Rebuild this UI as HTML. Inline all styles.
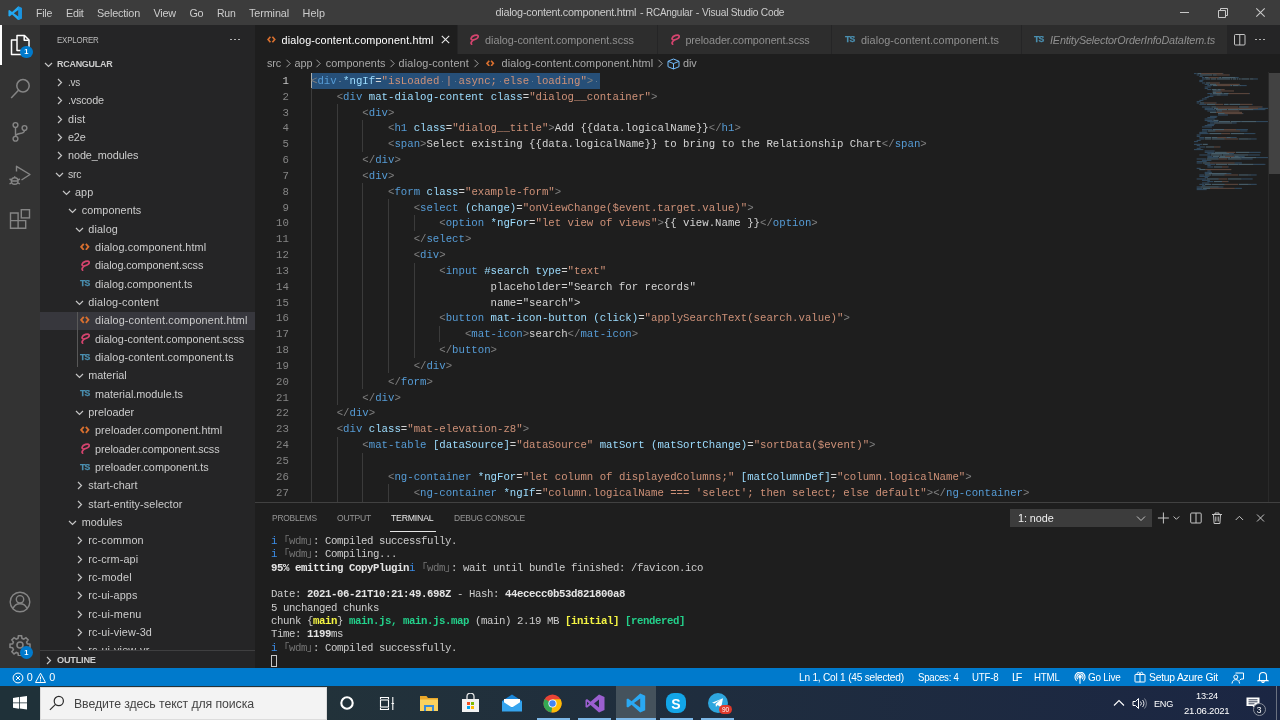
<!DOCTYPE html><html><head><meta charset="utf-8"><title>dialog-content.component.html - RCAngular - Visual Studio Code</title><style>
*{box-sizing:border-box}
html,body{margin:0;padding:0}
body{width:1280px;height:720px;overflow:hidden;background:#1e1e1e;position:relative;will-change:transform;font-family:"Liberation Sans","DejaVu Sans",sans-serif;font-size:10.83px;color:#cccccc}
.abs{position:absolute}
.t{position:absolute;white-space:pre;line-height:1}
#titlebar{left:0;top:0;width:1280px;height:25px;background:#3c3c3c}
#actbar{left:0;top:25px;width:40px;height:644px;background:#333333}
#sidebar{left:40px;top:25px;width:215px;height:644px;background:#252526;overflow:hidden}
#tabs{left:255px;top:25px;width:1025px;height:29px;background:#252526;overflow:hidden}
.tab{position:absolute;top:0;height:29px;background:#2d2d2d;border-right:1px solid #252526}
.tab.act{background:#1e1e1e}
#code{left:255px;top:72px;width:1025px;height:430px;background:#1e1e1e;overflow:hidden}
.ln{position:absolute;left:0;width:33.8px;text-align:right;color:#858585;font-family:"Liberation Mono","DejaVu Sans Mono",monospace;font-size:10.69px;line-height:15.833px;height:15.833px;white-space:pre}
.cl{position:absolute;left:56px;color:#d4d4d4;font-family:"Liberation Mono","DejaVu Sans Mono",monospace;font-size:10.69px;line-height:15.833px;height:15.833px;white-space:pre}
.b{color:#808080}.g{color:#569cd6}.a{color:#9cdcfe}.s{color:#ce9178}
#panel{left:255px;top:502px;width:1025px;height:167px;background:#1e1e1e;border-top:1px solid #414141;overflow:hidden}
.tl{position:absolute;left:16px;color:#cccccc;font-family:"Liberation Mono","Noto Sans CJK JP","DejaVu Sans Mono",monospace;font-size:10.69px;letter-spacing:-0.415px;line-height:13.333px;height:13.333px;white-space:pre}
.tl b{color:#e5e5e5}
#status{left:0;top:668.1px;width:1280px;height:18.3px;background:#007acc;color:#fff}
#taskbar{left:0;top:686.4px;width:1280px;height:33.6px;background:linear-gradient(90deg,#22323a 0%,#22323a 25%,#1f2d3e 55%,#1b2643 100%)}
.row{position:absolute;left:0;width:215px;height:18.333px}
</style></head><body>
<div id="titlebar" class="abs">
<svg class="abs" style="left:7.5px;top:5.5px" width="14.5" height="14.5" viewBox="0 0 100 100"><path d="M71 2 L96 14 V86 L71 98 L28 59 L10 73 L3 69 V31 L10 27 L28 41 Z M71 28 L40 50 L71 72 Z" fill="#23a9f2" fill-rule="evenodd"/><path d="M71 2 L96 14 V86 L71 98 Z" fill="#0f7fd0" opacity=".5"/></svg>
<span class="t" style="left:35.75px;top:7.58px;font-size:10.83px;color:#cccccc;letter-spacing:-0.250px;transform:scaleX(0.9726);transform-origin:0 50%">File</span>
<span class="t" style="left:65.50px;top:7.58px;font-size:10.83px;color:#cccccc;letter-spacing:-0.250px;transform:scaleX(0.9908);transform-origin:0 50%">Edit</span>
<span class="t" style="left:97.00px;top:7.58px;font-size:10.83px;color:#cccccc;letter-spacing:-0.172px">Selection</span>
<span class="t" style="left:153.50px;top:7.58px;font-size:10.83px;color:#cccccc;letter-spacing:-0.195px">View</span>
<span class="t" style="left:189.50px;top:7.58px;font-size:10.83px;color:#cccccc;letter-spacing:-0.474px">Go</span>
<span class="t" style="left:217.00px;top:7.58px;font-size:10.83px;color:#cccccc;letter-spacing:-0.250px;transform:scaleX(0.9677);transform-origin:0 50%">Run</span>
<span class="t" style="left:249.00px;top:7.58px;font-size:10.83px;color:#cccccc;letter-spacing:-0.116px">Terminal</span>
<span class="t" style="left:302.50px;top:7.58px;font-size:10.83px;color:#cccccc;letter-spacing:0.057px">Help</span>
<span class="t" style="left:495.50px;top:7.08px;font-size:10.83px;color:#cccccc;letter-spacing:-0.252px">dialog-content.component.html</span>
<span class="t" style="left:640.00px;top:7.08px;font-size:10.83px;color:#cccccc;letter-spacing:-0.606px">-</span>
<span class="t" style="left:645.50px;top:7.08px;font-size:10.83px;color:#cccccc;letter-spacing:-0.250px;transform:scaleX(0.9168);transform-origin:0 50%">RCAngular</span>
<span class="t" style="left:695.70px;top:7.08px;font-size:10.83px;color:#cccccc;letter-spacing:-0.606px">-</span>
<span class="t" style="left:702.00px;top:7.08px;font-size:10.83px;color:#cccccc;letter-spacing:-0.250px;transform:scaleX(0.9415);transform-origin:0 50%">Visual Studio Code</span>
<svg class="abs" style="left:1170px;top:0" width="110" height="25" viewBox="0 0 110 25"><g stroke="#c8c8c8" stroke-width="1" fill="none"><path d="M10 12.5h9"/><path d="M48.500 10.500h7v7h-7z"/><path d="M50.500 10.500v-2h7v7h-2"/><path d="M86.300 8.300l8.400 8.400M94.700 8.300l-8.400 8.400" stroke-width="1.1"/></g></svg>
</div>
<div id="actbar" class="abs">
<div class="abs" style="left:0;top:0;width:1.600px;height:40px;background:#fff"></div>
<svg class="abs" style="left:7.60px;top:8.20px" width="24" height="24" viewBox="0 0 24 24"><g fill="none" stroke="#ffffff" stroke-width="1.500" stroke-linejoin="round"><path d="M9 2.500h7.500l4.500 4.500v10.500h-12z"/><path d="M16.200 2.800v4.500h4.500"/><path d="M9 7h-5.500v14.500h10.500v-4"/></g></svg>
<div class="abs" style="left:20px;top:20.700px;width:12.500px;height:12.500px;border-radius:7px;background:#007acc"></div><span class="t" style="left:20.00px;top:23.25px;font-size:7.50px;color:#fff;font-weight:bold;width:12.500px;text-align:center">1</span>
<svg class="abs" style="left:8.00px;top:51.00px" width="24" height="24" viewBox="0 0 24 24"><g fill="none" stroke="#858585" stroke-width="1.500"><circle cx="15" cy="9.750" r="6.200"/><path d="M10.500 14.200l-7.300 7.800"/></g></svg>
<svg class="abs" style="left:8.00px;top:95.00px" width="24" height="24" viewBox="0 0 24 24"><g fill="none" stroke="#858585" stroke-width="1.400"><circle cx="7.500" cy="5" r="2.400"/><circle cx="7.500" cy="18.750" r="2.400"/><circle cx="16.500" cy="8" r="2.400"/><path d="M7.500 7.400v9M16.500 10.400c0 4.600-9 1.600-9 6"/></g></svg>
<svg class="abs" style="left:8.00px;top:138.00px" width="24" height="24" viewBox="0 0 24 24"><g fill="none" stroke="#858585" stroke-width="1.400" stroke-linejoin="round"><path d="M8.500 8.500v-5.200l13.500 8.200-8.500 5.500"/><circle cx="6.700" cy="18" r="3.300"/><path d="M6.700 14.700v-1.500M1.500 16l2 1M1.500 21l2-1.200M11.900 16l-2 1M11.900 21l-2-1.200M3.400 18h6.600"/></g></svg>
<svg class="abs" style="left:8.00px;top:181.50px" width="24" height="24" viewBox="0 0 24 24"><g fill="none" stroke="#858585" stroke-width="1.400"><path d="M2.500 6h7.600v7.600h7.600v7.700h-15.200zM2.500 13.600h7.600M10.100 13.600v7.700"/><rect x="13.300" y="2.700" width="8.200" height="8.200"/></g></svg>
<svg class="abs" style="left:8.00px;top:564.75px" width="24" height="24" viewBox="0 0 24 24"><g fill="none" stroke="#858585" stroke-width="1.400"><circle cx="12" cy="12" r="9.800"/><circle cx="12" cy="9.300" r="3.700"/><path d="M5 18.500c1.300-3.300 3.800-4.700 7-4.700s5.700 1.400 7 4.700"/></g></svg>
<svg class="abs" style="left:8.50px;top:609.00px" width="22" height="22" viewBox="0 0 24 24"><g fill="none" stroke="#858585" stroke-width="1.700"><circle cx="12" cy="12" r="3.300"/><path d="M10.300 2h3.400l.5 2.900 1.900.8 2.400-1.700 2.400 2.400-1.700 2.400.8 1.900 2.900.5v3.400l-2.900.5-.8 1.900 1.700 2.400-2.400 2.400-2.400-1.700-1.900.8-.5 2.900h-3.400l-.5-2.900-1.900-.8-2.400 1.700-2.400-2.400 1.700-2.400-.8-1.900-2.900-.5v-3.400l2.900-.5.800-1.900-1.700-2.400 2.400-2.400 2.400 1.700 1.900-.8z"/></g></svg>
<div class="abs" style="left:20px;top:621.200px;width:12.500px;height:12.500px;border-radius:7px;background:#007acc"></div><span class="t" style="left:20.00px;top:623.75px;font-size:7.50px;color:#fff;font-weight:bold;width:12.500px;text-align:center">1</span>
</div>
<div id="sidebar" class="abs">
<span class="t" style="left:16.80px;top:10.40px;font-size:9.40px;color:#bbbbbb;letter-spacing:-0.250px;transform:scaleX(0.8456);transform-origin:0 50%">EXPLORER</span>
<div class="abs" style="left:190.30px;top:13.500px;width:1.600px;height:1.600px;border-radius:1px;background:#c5c5c5"></div>
<div class="abs" style="left:194.20px;top:13.500px;width:1.600px;height:1.600px;border-radius:1px;background:#c5c5c5"></div>
<div class="abs" style="left:198.10px;top:13.500px;width:1.600px;height:1.600px;border-radius:1px;background:#c5c5c5"></div>
<svg class="abs" style="left:4.00px;top:36.50px" width="9" height="6" viewBox="0 0 9 6"><path d="M1 1l3.500 3.500 3.500-3.500" fill="none" stroke="#c5c5c5" stroke-width="1.200"/></svg>
<span class="t" style="left:16.80px;top:34.40px;font-size:9.60px;color:#cccccc;letter-spacing:-0.250px;transform:scaleX(0.9310);transform-origin:0 50%;font-weight:bold">RCANGULAR</span>
<div class="row" style="top:48.33px">
<svg class="abs" style="left:16.70px;top:4.70px" width="6" height="9" viewBox="0 0 6 9"><path d="M1 1l3.500 3.500-3.500 3.500" fill="none" stroke="#c5c5c5" stroke-width="1.200"/></svg>
<span class="t" style="left:28.00px;top:3.78px;font-size:10.83px;color:#cccccc;letter-spacing:-0.250px;transform:scaleX(0.9168);transform-origin:0 50%">.vs</span>
</div>
<div class="row" style="top:66.66px">
<svg class="abs" style="left:16.70px;top:4.70px" width="6" height="9" viewBox="0 0 6 9"><path d="M1 1l3.500 3.500-3.500 3.500" fill="none" stroke="#c5c5c5" stroke-width="1.200"/></svg>
<span class="t" style="left:28.00px;top:3.78px;font-size:10.83px;color:#cccccc;letter-spacing:-0.225px">.vscode</span>
</div>
<div class="row" style="top:85.00px">
<svg class="abs" style="left:16.70px;top:4.70px" width="6" height="9" viewBox="0 0 6 9"><path d="M1 1l3.500 3.500-3.500 3.500" fill="none" stroke="#c5c5c5" stroke-width="1.200"/></svg>
<span class="t" style="left:28.00px;top:3.78px;font-size:10.83px;color:#cccccc;letter-spacing:0.162px">dist</span>
</div>
<div class="row" style="top:103.33px">
<svg class="abs" style="left:16.70px;top:4.70px" width="6" height="9" viewBox="0 0 6 9"><path d="M1 1l3.500 3.500-3.500 3.500" fill="none" stroke="#c5c5c5" stroke-width="1.200"/></svg>
<span class="t" style="left:28.00px;top:3.78px;font-size:10.83px;color:#cccccc;letter-spacing:-0.190px">e2e</span>
</div>
<div class="row" style="top:121.66px">
<svg class="abs" style="left:16.70px;top:4.70px" width="6" height="9" viewBox="0 0 6 9"><path d="M1 1l3.500 3.500-3.500 3.500" fill="none" stroke="#c5c5c5" stroke-width="1.200"/></svg>
<span class="t" style="left:28.00px;top:3.78px;font-size:10.83px;color:#cccccc;letter-spacing:-0.067px">node_modules</span>
</div>
<div class="row" style="top:140.00px">
<svg class="abs" style="left:14.70px;top:6.70px" width="9" height="6" viewBox="0 0 9 6"><path d="M1 1l3.500 3.500 3.500-3.500" fill="none" stroke="#c5c5c5" stroke-width="1.200"/></svg>
<span class="t" style="left:28.00px;top:3.78px;font-size:10.83px;color:#cccccc;letter-spacing:-0.250px;transform:scaleX(0.9681);transform-origin:0 50%">src</span>
</div>
<div class="row" style="top:158.33px">
<svg class="abs" style="left:21.70px;top:6.70px" width="9" height="6" viewBox="0 0 9 6"><path d="M1 1l3.500 3.500 3.500-3.500" fill="none" stroke="#c5c5c5" stroke-width="1.200"/></svg>
<span class="t" style="left:35.00px;top:3.78px;font-size:10.83px;color:#cccccc;letter-spacing:0.060px">app</span>
</div>
<div class="row" style="top:176.66px">
<svg class="abs" style="left:28.45px;top:6.70px" width="9" height="6" viewBox="0 0 9 6"><path d="M1 1l3.500 3.500 3.500-3.500" fill="none" stroke="#c5c5c5" stroke-width="1.200"/></svg>
<span class="t" style="left:41.75px;top:3.78px;font-size:10.83px;color:#cccccc;letter-spacing:0.050px">components</span>
</div>
<div class="row" style="top:195.00px">
<svg class="abs" style="left:34.95px;top:6.70px" width="9" height="6" viewBox="0 0 9 6"><path d="M1 1l3.500 3.500 3.500-3.500" fill="none" stroke="#c5c5c5" stroke-width="1.200"/></svg>
<span class="t" style="left:48.25px;top:3.78px;font-size:10.83px;color:#cccccc;letter-spacing:0.141px">dialog</span>
</div>
<div class="row" style="top:213.33px">
<svg class="abs" style="left:40.00px;top:4.36px" width="9.60" height="7.68" viewBox="0 0 10 8"><path d="M3.900 0.900l-2.700 3.100 2.700 3.100M6.100 0.900l2.700 3.100-2.700 3.100" fill="none" stroke="#d9702f" stroke-width="1.900"/></svg>
<span class="t" style="left:55.00px;top:3.78px;font-size:10.83px;color:#cccccc;letter-spacing:0.109px">dialog.component.html</span>
</div>
<div class="row" style="top:231.66px">
<svg class="abs" style="left:39.80px;top:3.30px" width="10.500" height="11" viewBox="0 0 10.5 11"><path d="M2.600 10.200c-1.400-1.200 0.400-3.100 1.900-4.300 2.700-0.300 5.300-2.200 4.600-4-1-1.800-6.200-0.300-7 2.300-0.400 1.500 1.500 2 2.700 1.800" fill="none" stroke="#d4446e" stroke-width="1.700" stroke-linecap="round"/></svg>
<span class="t" style="left:55.00px;top:3.78px;font-size:10.83px;color:#cccccc;letter-spacing:-0.091px">dialog.component.scss</span>
</div>
<div class="row" style="top:250.00px">
<span class="t" style="left:40.00px;top:4.35px;font-size:8.70px;color:#4a8fb0;letter-spacing:-0.759px;font-weight:bold;-webkit-text-stroke:0.25px #4a8fb0">TS</span>
<span class="t" style="left:55.00px;top:3.78px;font-size:10.83px;color:#cccccc;letter-spacing:0.030px">dialog.component.ts</span>
</div>
<div class="row" style="top:268.33px">
<svg class="abs" style="left:34.95px;top:6.70px" width="9" height="6" viewBox="0 0 9 6"><path d="M1 1l3.500 3.500 3.500-3.500" fill="none" stroke="#c5c5c5" stroke-width="1.200"/></svg>
<span class="t" style="left:48.25px;top:3.78px;font-size:10.83px;color:#cccccc;letter-spacing:0.194px">dialog-content</span>
</div>
<div class="row" style="top:286.66px;background:#37373d">
<svg class="abs" style="left:40.00px;top:4.36px" width="9.60" height="7.68" viewBox="0 0 10 8"><path d="M3.900 0.900l-2.700 3.100 2.700 3.100M6.100 0.900l2.700 3.100-2.700 3.100" fill="none" stroke="#d9702f" stroke-width="1.900"/></svg>
<span class="t" style="left:55.00px;top:3.78px;font-size:10.83px;color:#cccccc;letter-spacing:0.152px">dialog-content.component.html</span>
</div>
<div class="row" style="top:305.00px">
<svg class="abs" style="left:39.80px;top:3.30px" width="10.500" height="11" viewBox="0 0 10.5 11"><path d="M2.600 10.200c-1.400-1.200 0.400-3.100 1.900-4.300 2.700-0.300 5.300-2.200 4.600-4-1-1.800-6.200-0.300-7 2.300-0.400 1.500 1.500 2 2.700 1.800" fill="none" stroke="#d4446e" stroke-width="1.700" stroke-linecap="round"/></svg>
<span class="t" style="left:55.00px;top:3.78px;font-size:10.83px;color:#cccccc;letter-spacing:-0.002px">dialog-content.component.scss</span>
</div>
<div class="row" style="top:323.33px">
<span class="t" style="left:40.00px;top:4.35px;font-size:8.70px;color:#4a8fb0;letter-spacing:-0.759px;font-weight:bold;-webkit-text-stroke:0.25px #4a8fb0">TS</span>
<span class="t" style="left:55.00px;top:3.78px;font-size:10.83px;color:#cccccc;letter-spacing:0.100px">dialog-content.component.ts</span>
</div>
<div class="row" style="top:341.66px">
<svg class="abs" style="left:34.95px;top:6.70px" width="9" height="6" viewBox="0 0 9 6"><path d="M1 1l3.500 3.500 3.500-3.500" fill="none" stroke="#c5c5c5" stroke-width="1.200"/></svg>
<span class="t" style="left:48.25px;top:3.78px;font-size:10.83px;color:#cccccc;letter-spacing:-0.002px">material</span>
</div>
<div class="row" style="top:360.00px">
<span class="t" style="left:40.00px;top:4.35px;font-size:8.70px;color:#4a8fb0;letter-spacing:-0.759px;font-weight:bold;-webkit-text-stroke:0.25px #4a8fb0">TS</span>
<span class="t" style="left:55.00px;top:3.78px;font-size:10.83px;color:#cccccc;letter-spacing:-0.027px">material.module.ts</span>
</div>
<div class="row" style="top:378.33px">
<svg class="abs" style="left:34.95px;top:6.70px" width="9" height="6" viewBox="0 0 9 6"><path d="M1 1l3.500 3.500 3.500-3.500" fill="none" stroke="#c5c5c5" stroke-width="1.200"/></svg>
<span class="t" style="left:48.25px;top:3.78px;font-size:10.83px;color:#cccccc;letter-spacing:0.027px">preloader</span>
</div>
<div class="row" style="top:396.66px">
<svg class="abs" style="left:40.00px;top:4.36px" width="9.60" height="7.68" viewBox="0 0 10 8"><path d="M3.900 0.900l-2.700 3.100 2.700 3.100M6.100 0.900l2.700 3.100-2.700 3.100" fill="none" stroke="#d9702f" stroke-width="1.900"/></svg>
<span class="t" style="left:55.00px;top:3.78px;font-size:10.83px;color:#cccccc;letter-spacing:0.084px">preloader.component.html</span>
</div>
<div class="row" style="top:415.00px">
<svg class="abs" style="left:39.80px;top:3.30px" width="10.500" height="11" viewBox="0 0 10.5 11"><path d="M2.600 10.200c-1.400-1.200 0.400-3.100 1.900-4.300 2.700-0.300 5.300-2.200 4.600-4-1-1.800-6.200-0.300-7 2.300-0.400 1.500 1.500 2 2.700 1.800" fill="none" stroke="#d4446e" stroke-width="1.700" stroke-linecap="round"/></svg>
<span class="t" style="left:55.00px;top:3.78px;font-size:10.83px;color:#cccccc;letter-spacing:-0.080px">preloader.component.scss</span>
</div>
<div class="row" style="top:433.33px">
<span class="t" style="left:40.00px;top:4.35px;font-size:8.70px;color:#4a8fb0;letter-spacing:-0.759px;font-weight:bold;-webkit-text-stroke:0.25px #4a8fb0">TS</span>
<span class="t" style="left:55.00px;top:3.78px;font-size:10.83px;color:#cccccc;letter-spacing:0.026px">preloader.component.ts</span>
</div>
<div class="row" style="top:451.66px">
<svg class="abs" style="left:36.95px;top:4.70px" width="6" height="9" viewBox="0 0 6 9"><path d="M1 1l3.500 3.500-3.500 3.500" fill="none" stroke="#c5c5c5" stroke-width="1.200"/></svg>
<span class="t" style="left:48.25px;top:3.78px;font-size:10.83px;color:#cccccc;letter-spacing:0.046px">start-chart</span>
</div>
<div class="row" style="top:470.00px">
<svg class="abs" style="left:36.95px;top:4.70px" width="6" height="9" viewBox="0 0 6 9"><path d="M1 1l3.500 3.500-3.500 3.500" fill="none" stroke="#c5c5c5" stroke-width="1.200"/></svg>
<span class="t" style="left:48.25px;top:3.78px;font-size:10.83px;color:#cccccc;letter-spacing:0.103px">start-entity-selector</span>
</div>
<div class="row" style="top:488.33px">
<svg class="abs" style="left:28.45px;top:6.70px" width="9" height="6" viewBox="0 0 9 6"><path d="M1 1l3.500 3.500 3.500-3.500" fill="none" stroke="#c5c5c5" stroke-width="1.200"/></svg>
<span class="t" style="left:41.75px;top:3.78px;font-size:10.83px;color:#cccccc;letter-spacing:-0.026px">modules</span>
</div>
<div class="row" style="top:506.66px">
<svg class="abs" style="left:36.95px;top:4.70px" width="6" height="9" viewBox="0 0 6 9"><path d="M1 1l3.500 3.500-3.500 3.500" fill="none" stroke="#c5c5c5" stroke-width="1.200"/></svg>
<span class="t" style="left:48.25px;top:3.78px;font-size:10.83px;color:#cccccc;letter-spacing:0.149px">rc-common</span>
</div>
<div class="row" style="top:525.00px">
<svg class="abs" style="left:36.95px;top:4.70px" width="6" height="9" viewBox="0 0 6 9"><path d="M1 1l3.500 3.500-3.500 3.500" fill="none" stroke="#c5c5c5" stroke-width="1.200"/></svg>
<span class="t" style="left:48.25px;top:3.78px;font-size:10.83px;color:#cccccc;letter-spacing:0.127px">rc-crm-api</span>
</div>
<div class="row" style="top:543.33px">
<svg class="abs" style="left:36.95px;top:4.70px" width="6" height="9" viewBox="0 0 6 9"><path d="M1 1l3.500 3.500-3.500 3.500" fill="none" stroke="#c5c5c5" stroke-width="1.200"/></svg>
<span class="t" style="left:48.25px;top:3.78px;font-size:10.83px;color:#cccccc;letter-spacing:0.172px">rc-model</span>
</div>
<div class="row" style="top:561.66px">
<svg class="abs" style="left:36.95px;top:4.70px" width="6" height="9" viewBox="0 0 6 9"><path d="M1 1l3.500 3.500-3.500 3.500" fill="none" stroke="#c5c5c5" stroke-width="1.200"/></svg>
<span class="t" style="left:48.25px;top:3.78px;font-size:10.83px;color:#cccccc;letter-spacing:0.110px">rc-ui-apps</span>
</div>
<div class="row" style="top:580.00px">
<svg class="abs" style="left:36.95px;top:4.70px" width="6" height="9" viewBox="0 0 6 9"><path d="M1 1l3.500 3.500-3.500 3.500" fill="none" stroke="#c5c5c5" stroke-width="1.200"/></svg>
<span class="t" style="left:48.25px;top:3.78px;font-size:10.83px;color:#cccccc;letter-spacing:0.150px">rc-ui-menu</span>
</div>
<div class="row" style="top:598.33px">
<svg class="abs" style="left:36.95px;top:4.70px" width="6" height="9" viewBox="0 0 6 9"><path d="M1 1l3.500 3.500-3.500 3.500" fill="none" stroke="#c5c5c5" stroke-width="1.200"/></svg>
<span class="t" style="left:48.25px;top:3.78px;font-size:10.83px;color:#cccccc;letter-spacing:0.136px">rc-ui-view-3d</span>
</div>
<div class="row" style="top:616.66px">
<svg class="abs" style="left:36.95px;top:4.70px" width="6" height="9" viewBox="0 0 6 9"><path d="M1 1l3.500 3.500-3.500 3.500" fill="none" stroke="#c5c5c5" stroke-width="1.200"/></svg>
<span class="t" style="left:48.25px;top:3.78px;font-size:10.83px;color:#cccccc;letter-spacing:0.176px">rc-ui-view-vr</span>
</div>
<div class="abs" style="left:37px;top:286.66px;width:1px;height:55px;background:#585858"></div>
<div class="abs" style="left:0;top:625px;width:215px;height:19px;background:#252526;border-top:1px solid #3f3f40"></div>
<svg class="abs" style="left:6.00px;top:630.50px" width="6" height="9" viewBox="0 0 6 9"><path d="M1 1l3.500 3.500-3.500 3.500" fill="none" stroke="#c5c5c5" stroke-width="1.200"/></svg>
<span class="t" style="left:17.00px;top:630.30px;font-size:9.60px;color:#cccccc;letter-spacing:-0.250px;transform:scaleX(0.9584);transform-origin:0 50%;font-weight:bold">OUTLINE</span>
</div>
<div id="tabs" class="abs">
<div class="tab act" style="left:0.00px;width:203.00px">
<svg class="abs" style="left:11.80px;top:10.78px" width="8.80" height="7.04" viewBox="0 0 10 8"><path d="M3.900 0.900l-2.700 3.100 2.700 3.100M6.100 0.900l2.700 3.100-2.700 3.100" fill="none" stroke="#d9702f" stroke-width="1.900"/></svg>
<span class="t" style="left:26.60px;top:9.98px;font-size:10.83px;color:#ffffff;letter-spacing:0.131px">dialog-content.component.html</span>
<svg class="abs" style="left:186.20px;top:10.300px" width="9" height="9" viewBox="0 0 9 9"><path d="M0.800 0.800l7.400 7.400M8.200 0.800l-7.400 7.400" stroke="#e8e8e8" stroke-width="1.100" fill="none"/></svg>
</div>
<div class="tab" style="left:203.00px;width:200.00px">
<svg class="abs" style="left:11.20px;top:8.70px" width="10.500" height="11" viewBox="0 0 10.5 11"><path d="M2.600 10.200c-1.400-1.200 0.400-3.100 1.900-4.300 2.700-0.300 5.300-2.200 4.600-4-1-1.800-6.200-0.300-7 2.300-0.400 1.500 1.500 2 2.700 1.800" fill="none" stroke="#d4446e" stroke-width="1.700" stroke-linecap="round"/></svg>
<span class="t" style="left:27.00px;top:9.98px;font-size:10.83px;color:#909090;letter-spacing:-0.010px">dialog-content.component.scss</span>
</div>
<div class="tab" style="left:403.00px;width:174.30px">
<svg class="abs" style="left:11.60px;top:8.70px" width="10.500" height="11" viewBox="0 0 10.5 11"><path d="M2.600 10.200c-1.400-1.200 0.400-3.100 1.900-4.300 2.700-0.300 5.300-2.200 4.600-4-1-1.800-6.200-0.300-7 2.300-0.400 1.500 1.500 2 2.700 1.800" fill="none" stroke="#d4446e" stroke-width="1.700" stroke-linecap="round"/></svg>
<span class="t" style="left:27.40px;top:9.98px;font-size:10.83px;color:#909090;letter-spacing:-0.088px">preloader.component.scss</span>
</div>
<div class="tab" style="left:577.30px;width:189.70px">
<span class="t" style="left:12.70px;top:9.95px;font-size:8.70px;color:#4a8fb0;letter-spacing:-0.759px;font-weight:bold;-webkit-text-stroke:0.25px #4a8fb0">TS</span>
<span class="t" style="left:28.70px;top:9.98px;font-size:10.83px;color:#909090;letter-spacing:0.072px">dialog-content.component.ts</span>
</div>
<div class="tab" style="left:767.00px;width:218.00px">
<span class="t" style="left:12.00px;top:9.95px;font-size:8.70px;color:#4a8fb0;letter-spacing:-0.759px;font-weight:bold;-webkit-text-stroke:0.25px #4a8fb0">TS</span>
<span class="t" style="left:28.00px;top:9.98px;font-size:10.83px;color:#909090;letter-spacing:-0.170px;font-style:italic">IEntitySelectorOrderInfoDataItem.ts</span>
</div>
<div class="abs" style="left:972px;top:0;width:53px;height:29px;background:#252526"></div>
<svg class="abs" style="left:979px;top:9px" width="12" height="12" viewBox="0 0 12 12"><rect x="0.500" y="0.500" width="10.500" height="10.500" rx="1" fill="none" stroke="#c5c5c5"/><path d="M5.750 0.500v10.500" stroke="#c5c5c5"/></svg>
<div class="abs" style="left:1000.30px;top:13.500px;width:1.600px;height:1.600px;border-radius:1px;background:#c5c5c5"></div>
<div class="abs" style="left:1004.20px;top:13.500px;width:1.600px;height:1.600px;border-radius:1px;background:#c5c5c5"></div>
<div class="abs" style="left:1008.10px;top:13.500px;width:1.600px;height:1.600px;border-radius:1px;background:#c5c5c5"></div>
</div>
<span class="t" style="left:267.00px;top:58.38px;font-size:10.83px;color:#a9a9a9;letter-spacing:-0.145px">src</span>
<span class="t" style="left:294.60px;top:58.38px;font-size:10.83px;color:#a9a9a9;letter-spacing:-0.057px">app</span>
<span class="t" style="left:325.70px;top:58.38px;font-size:10.83px;color:#a9a9a9;letter-spacing:0.080px">components</span>
<span class="t" style="left:398.60px;top:58.38px;font-size:10.83px;color:#a9a9a9;letter-spacing:0.169px">dialog-content</span>
<span class="t" style="left:501.60px;top:58.38px;font-size:10.83px;color:#a9a9a9;letter-spacing:0.121px">dialog-content.component.html</span>
<span class="t" style="left:683.00px;top:58.38px;font-size:10.83px;color:#a9a9a9;letter-spacing:-0.115px">div</span>
<svg class="abs" style="left:284.50px;top:59.00px" width="7" height="9" viewBox="0 0 7 9"><path d="M1.500 0.800l3.700 3.700-3.700 3.700" fill="none" stroke="#a0a0a0" stroke-width="1"/></svg>
<svg class="abs" style="left:315.00px;top:59.00px" width="7" height="9" viewBox="0 0 7 9"><path d="M1.500 0.800l3.700 3.700-3.700 3.700" fill="none" stroke="#a0a0a0" stroke-width="1"/></svg>
<svg class="abs" style="left:388.50px;top:59.00px" width="7" height="9" viewBox="0 0 7 9"><path d="M1.500 0.800l3.700 3.700-3.700 3.700" fill="none" stroke="#a0a0a0" stroke-width="1"/></svg>
<svg class="abs" style="left:472.50px;top:59.00px" width="7" height="9" viewBox="0 0 7 9"><path d="M1.500 0.800l3.700 3.700-3.700 3.700" fill="none" stroke="#a0a0a0" stroke-width="1"/></svg>
<svg class="abs" style="left:656.80px;top:59.00px" width="7" height="9" viewBox="0 0 7 9"><path d="M1.500 0.800l3.700 3.700-3.700 3.700" fill="none" stroke="#a0a0a0" stroke-width="1"/></svg>
<svg class="abs" style="left:486.30px;top:59.64px" width="8.40" height="6.72" viewBox="0 0 10 8"><path d="M3.900 0.900l-2.700 3.100 2.700 3.100M6.100 0.900l2.700 3.100-2.700 3.100" fill="none" stroke="#d9702f" stroke-width="1.900"/></svg>
<svg class="abs" style="left:666.500px;top:57.500px" width="13" height="12" viewBox="0 0 13 12"><g fill="none" stroke="#75beff" stroke-width="1" stroke-linejoin="round"><path d="M6.500 1l5.500 2.300v5.400l-5.500 2.300-5.500-2.300v-5.400z"/><path d="M1 3.300l5.500 2.300 5.500-2.300M6.500 5.600v5.400"/></g></svg>
<div id="code" class="abs">
<div class="abs" style="left:56px;top:0.50px;width:288.6px;height:16.13px;background:#264f78"></div>
<div class="abs" style="left:55.500px;top:0.50px;width:1.300px;height:16.13px;background:#aeafad"></div>
<div class="abs" style="left:56.0px;top:16.33px;width:1px;height:427.50px;background:#3b3b3b"></div>
<div class="abs" style="left:81.7px;top:32.17px;width:1px;height:300.83px;background:#3b3b3b"></div>
<div class="abs" style="left:81.7px;top:364.67px;width:1px;height:79.17px;background:#3b3b3b"></div>
<div class="abs" style="left:107.3px;top:48.00px;width:1px;height:31.67px;background:#3b3b3b"></div>
<div class="abs" style="left:107.3px;top:111.33px;width:1px;height:205.83px;background:#3b3b3b"></div>
<div class="abs" style="left:107.3px;top:380.50px;width:1px;height:63.33px;background:#3b3b3b"></div>
<div class="abs" style="left:133.0px;top:127.17px;width:1px;height:174.17px;background:#3b3b3b"></div>
<div class="abs" style="left:133.0px;top:412.17px;width:1px;height:31.67px;background:#3b3b3b"></div>
<div class="abs" style="left:158.6px;top:143.00px;width:1px;height:15.83px;background:#3b3b3b"></div>
<div class="abs" style="left:158.6px;top:190.50px;width:1px;height:95.00px;background:#3b3b3b"></div>
<div class="abs" style="left:184.3px;top:253.83px;width:1px;height:15.83px;background:#3b3b3b"></div>
<div class="abs" style="left:84.21px;top:9.02px;width:1.300px;height:1.300px;background:#5f7c98"></div>
<div class="abs" style="left:186.84px;top:9.02px;width:1.300px;height:1.300px;background:#5f7c98"></div>
<div class="abs" style="left:199.66px;top:9.02px;width:1.300px;height:1.300px;background:#5f7c98"></div>
<div class="abs" style="left:244.56px;top:9.02px;width:1.300px;height:1.300px;background:#5f7c98"></div>
<div class="abs" style="left:276.63px;top:9.02px;width:1.300px;height:1.300px;background:#5f7c98"></div>
<div class="abs" style="left:340.77px;top:9.02px;width:1.300px;height:1.300px;background:#5f7c98"></div>
<div class="abs" style="left:1013px;top:0;width:1px;height:430px;background:#2a2a2a"></div>
<div class="ln" style="top:1.90px;color:#c6c6c6">1</div>
<div class="cl" style="top:1.90px"><span class="b">&lt;</span><span class="g">div</span> <span class="a">*ngIf</span>=<span class="s">"isLoaded | async; else loading"</span><span class="b">&gt;</span></div>
<div class="ln" style="top:17.73px">2</div>
<div class="cl" style="top:17.73px">    <span class="b">&lt;</span><span class="g">div</span> <span class="a">mat-dialog-content</span> <span class="a">class</span>=<span class="s">"dialog__container"</span><span class="b">&gt;</span></div>
<div class="ln" style="top:33.57px">3</div>
<div class="cl" style="top:33.57px">        <span class="b">&lt;</span><span class="g">div</span><span class="b">&gt;</span></div>
<div class="ln" style="top:49.40px">4</div>
<div class="cl" style="top:49.40px">            <span class="b">&lt;</span><span class="g">h1</span> <span class="a">class</span>=<span class="s">"dialog__title"</span><span class="b">&gt;</span>Add {{data.logicalName}}<span class="b">&lt;/</span><span class="g">h1</span><span class="b">&gt;</span></div>
<div class="ln" style="top:65.23px">5</div>
<div class="cl" style="top:65.23px">            <span class="b">&lt;</span><span class="g">span</span><span class="b">&gt;</span>Select existing {{data.logicalName}} to bring to the Relationship Chart<span class="b">&lt;/</span><span class="g">span</span><span class="b">&gt;</span></div>
<div class="ln" style="top:81.07px">6</div>
<div class="cl" style="top:81.07px">        <span class="b">&lt;/</span><span class="g">div</span><span class="b">&gt;</span></div>
<div class="ln" style="top:96.90px">7</div>
<div class="cl" style="top:96.90px">        <span class="b">&lt;</span><span class="g">div</span><span class="b">&gt;</span></div>
<div class="ln" style="top:112.73px">8</div>
<div class="cl" style="top:112.73px">            <span class="b">&lt;</span><span class="g">form</span> <span class="a">class</span>=<span class="s">"example-form"</span><span class="b">&gt;</span></div>
<div class="ln" style="top:128.57px">9</div>
<div class="cl" style="top:128.57px">                <span class="b">&lt;</span><span class="g">select</span> <span class="a">(change)</span>=<span class="s">"onViewChange($event.target.value)"</span><span class="b">&gt;</span></div>
<div class="ln" style="top:144.40px">10</div>
<div class="cl" style="top:144.40px">                    <span class="b">&lt;</span><span class="g">option</span> <span class="a">*ngFor</span>=<span class="s">"let view of views"</span><span class="b">&gt;</span>{{ view.Name }}<span class="b">&lt;/</span><span class="g">option</span><span class="b">&gt;</span></div>
<div class="ln" style="top:160.23px">11</div>
<div class="cl" style="top:160.23px">                <span class="b">&lt;/</span><span class="g">select</span><span class="b">&gt;</span></div>
<div class="ln" style="top:176.07px">12</div>
<div class="cl" style="top:176.07px">                <span class="b">&lt;</span><span class="g">div</span><span class="b">&gt;</span></div>
<div class="ln" style="top:191.90px">13</div>
<div class="cl" style="top:191.90px">                    <span class="b">&lt;</span><span class="g">input</span> <span class="a">#search</span> <span class="a">type</span>=<span class="s">"text"</span></div>
<div class="ln" style="top:207.73px">14</div>
<div class="cl" style="top:207.73px">                            placeholder="Search for records"</div>
<div class="ln" style="top:223.57px">15</div>
<div class="cl" style="top:223.57px">                            name="search"&gt;</div>
<div class="ln" style="top:239.40px">16</div>
<div class="cl" style="top:239.40px">                    <span class="b">&lt;</span><span class="g">button</span> <span class="a">mat-icon-button</span> <span class="a">(click)</span>=<span class="s">"applySearchText(search.value)"</span><span class="b">&gt;</span></div>
<div class="ln" style="top:255.23px">17</div>
<div class="cl" style="top:255.23px">                        <span class="b">&lt;</span><span class="g">mat-icon</span><span class="b">&gt;</span>search<span class="b">&lt;/</span><span class="g">mat-icon</span><span class="b">&gt;</span></div>
<div class="ln" style="top:271.07px">18</div>
<div class="cl" style="top:271.07px">                    <span class="b">&lt;/</span><span class="g">button</span><span class="b">&gt;</span></div>
<div class="ln" style="top:286.90px">19</div>
<div class="cl" style="top:286.90px">                <span class="b">&lt;/</span><span class="g">div</span><span class="b">&gt;</span></div>
<div class="ln" style="top:302.73px">20</div>
<div class="cl" style="top:302.73px">            <span class="b">&lt;/</span><span class="g">form</span><span class="b">&gt;</span></div>
<div class="ln" style="top:318.57px">21</div>
<div class="cl" style="top:318.57px">        <span class="b">&lt;/</span><span class="g">div</span><span class="b">&gt;</span></div>
<div class="ln" style="top:334.40px">22</div>
<div class="cl" style="top:334.40px">    <span class="b">&lt;/</span><span class="g">div</span><span class="b">&gt;</span></div>
<div class="ln" style="top:350.23px">23</div>
<div class="cl" style="top:350.23px">    <span class="b">&lt;</span><span class="g">div</span> <span class="a">class</span>=<span class="s">"mat-elevation-z8"</span><span class="b">&gt;</span></div>
<div class="ln" style="top:366.07px">24</div>
<div class="cl" style="top:366.07px">        <span class="b">&lt;</span><span class="g">mat-table</span> <span class="a">[dataSource]</span>=<span class="s">"dataSource"</span> <span class="a">matSort</span> <span class="a">(matSortChange)</span>=<span class="s">"sortData($event)"</span><span class="b">&gt;</span></div>
<div class="ln" style="top:381.90px">25</div>
<div class="ln" style="top:397.73px">26</div>
<div class="cl" style="top:397.73px">            <span class="b">&lt;</span><span class="g">ng-container</span> <span class="a">*ngFor</span>=<span class="s">"let column of displayedColumns;"</span> <span class="a">[matColumnDef]</span>=<span class="s">"column.logicalName"</span><span class="b">&gt;</span></div>
<div class="ln" style="top:413.57px">27</div>
<div class="cl" style="top:413.57px">                <span class="b">&lt;</span><span class="g">ng-container</span> <span class="a">*ngIf</span>=<span class="s">"column.logicalName === 'select'; then select; else default"</span><span class="b">&gt;</span><span class="b">&lt;/</span><span class="g">ng-container</span><span class="b">&gt;</span></div>
<svg class="abs" style="left:939px;top:0.600px" width="74" height="120" viewBox="0 0 74 120"><rect x="0.00" y="0.20" width="2.67" height="0.9" fill="#569cd6" opacity=".42"/><rect x="3.33" y="0.20" width="4.00" height="0.9" fill="#9cdcfe" opacity=".42"/><rect x="7.34" y="0.20" width="21.34" height="0.9" fill="#ce9178" opacity=".42"/><rect x="28.68" y="0.20" width="0.67" height="0.9" fill="#569cd6" opacity=".42"/><rect x="2.67" y="1.53" width="2.67" height="0.9" fill="#569cd6" opacity=".42"/><rect x="6.00" y="1.53" width="12.01" height="0.9" fill="#9cdcfe" opacity=".42"/><rect x="18.68" y="1.53" width="4.00" height="0.9" fill="#9cdcfe" opacity=".42"/><rect x="22.68" y="1.53" width="12.67" height="0.9" fill="#ce9178" opacity=".42"/><rect x="35.35" y="1.53" width="0.67" height="0.9" fill="#569cd6" opacity=".42"/><rect x="5.34" y="2.87" width="2.67" height="0.9" fill="#569cd6" opacity=".42"/><rect x="8.00" y="2.87" width="0.67" height="0.9" fill="#569cd6" opacity=".42"/><rect x="8.00" y="4.20" width="2.00" height="0.9" fill="#569cd6" opacity=".42"/><rect x="10.67" y="4.20" width="4.00" height="0.9" fill="#9cdcfe" opacity=".42"/><rect x="14.67" y="4.20" width="10.01" height="0.9" fill="#ce9178" opacity=".42"/><rect x="24.68" y="4.20" width="0.67" height="0.9" fill="#569cd6" opacity=".42"/><rect x="25.35" y="4.20" width="2.00" height="0.9" fill="#9cdcfe" opacity=".42"/><rect x="28.01" y="4.20" width="13.34" height="0.9" fill="#9cdcfe" opacity=".42"/><rect x="41.35" y="4.20" width="2.67" height="0.9" fill="#569cd6" opacity=".42"/><rect x="44.02" y="4.20" width="0.67" height="0.9" fill="#569cd6" opacity=".42"/><rect x="8.00" y="5.53" width="3.33" height="0.9" fill="#569cd6" opacity=".42"/><rect x="11.34" y="5.53" width="0.67" height="0.9" fill="#569cd6" opacity=".42"/><rect x="12.01" y="5.53" width="4.00" height="0.9" fill="#9cdcfe" opacity=".42"/><rect x="16.68" y="5.53" width="5.34" height="0.9" fill="#9cdcfe" opacity=".42"/><rect x="22.68" y="5.53" width="13.34" height="0.9" fill="#9cdcfe" opacity=".42"/><rect x="36.69" y="5.53" width="1.33" height="0.9" fill="#9cdcfe" opacity=".42"/><rect x="38.69" y="5.53" width="3.33" height="0.9" fill="#9cdcfe" opacity=".42"/><rect x="42.69" y="5.53" width="1.33" height="0.9" fill="#9cdcfe" opacity=".42"/><rect x="44.69" y="5.53" width="2.00" height="0.9" fill="#9cdcfe" opacity=".42"/><rect x="47.36" y="5.53" width="8.00" height="0.9" fill="#9cdcfe" opacity=".42"/><rect x="56.03" y="5.53" width="3.33" height="0.9" fill="#9cdcfe" opacity=".42"/><rect x="59.36" y="5.53" width="4.00" height="0.9" fill="#569cd6" opacity=".42"/><rect x="63.37" y="5.53" width="0.67" height="0.9" fill="#569cd6" opacity=".42"/><rect x="5.34" y="6.87" width="3.33" height="0.9" fill="#569cd6" opacity=".42"/><rect x="8.67" y="6.87" width="0.67" height="0.9" fill="#569cd6" opacity=".42"/><rect x="5.34" y="8.20" width="2.67" height="0.9" fill="#569cd6" opacity=".42"/><rect x="8.00" y="8.20" width="0.67" height="0.9" fill="#569cd6" opacity=".42"/><rect x="8.00" y="9.53" width="3.33" height="0.9" fill="#569cd6" opacity=".42"/><rect x="12.01" y="9.53" width="4.00" height="0.9" fill="#9cdcfe" opacity=".42"/><rect x="16.01" y="9.53" width="9.34" height="0.9" fill="#ce9178" opacity=".42"/><rect x="25.35" y="9.53" width="0.67" height="0.9" fill="#569cd6" opacity=".42"/><rect x="10.67" y="10.87" width="4.67" height="0.9" fill="#569cd6" opacity=".42"/><rect x="16.01" y="10.87" width="6.00" height="0.9" fill="#9cdcfe" opacity=".42"/><rect x="22.01" y="10.87" width="23.35" height="0.9" fill="#ce9178" opacity=".42"/><rect x="45.36" y="10.87" width="0.67" height="0.9" fill="#569cd6" opacity=".42"/><rect x="13.34" y="12.20" width="4.67" height="0.9" fill="#569cd6" opacity=".42"/><rect x="18.68" y="12.20" width="4.67" height="0.9" fill="#9cdcfe" opacity=".42"/><rect x="23.35" y="12.20" width="12.67" height="0.9" fill="#ce9178" opacity=".42"/><rect x="36.02" y="12.20" width="0.67" height="0.9" fill="#569cd6" opacity=".42"/><rect x="36.69" y="12.20" width="1.33" height="0.9" fill="#9cdcfe" opacity=".42"/><rect x="38.69" y="12.20" width="6.00" height="0.9" fill="#9cdcfe" opacity=".42"/><rect x="45.36" y="12.20" width="1.33" height="0.9" fill="#9cdcfe" opacity=".42"/><rect x="46.69" y="12.20" width="5.34" height="0.9" fill="#569cd6" opacity=".42"/><rect x="52.03" y="12.20" width="0.67" height="0.9" fill="#569cd6" opacity=".42"/><rect x="10.67" y="13.53" width="5.34" height="0.9" fill="#569cd6" opacity=".42"/><rect x="16.01" y="13.53" width="0.67" height="0.9" fill="#569cd6" opacity=".42"/><rect x="10.67" y="14.87" width="2.67" height="0.9" fill="#569cd6" opacity=".42"/><rect x="13.34" y="14.87" width="0.67" height="0.9" fill="#569cd6" opacity=".42"/><rect x="13.34" y="16.20" width="4.00" height="0.9" fill="#569cd6" opacity=".42"/><rect x="18.01" y="16.20" width="4.67" height="0.9" fill="#9cdcfe" opacity=".42"/><rect x="23.35" y="16.20" width="3.33" height="0.9" fill="#9cdcfe" opacity=".42"/><rect x="26.68" y="16.20" width="4.00" height="0.9" fill="#ce9178" opacity=".42"/><rect x="18.68" y="17.53" width="8.00" height="0.9" fill="#9cdcfe" opacity=".42"/><rect x="26.68" y="17.53" width="13.34" height="0.9" fill="#ce9178" opacity=".42"/><rect x="18.68" y="18.87" width="3.33" height="0.9" fill="#9cdcfe" opacity=".42"/><rect x="22.01" y="18.87" width="5.34" height="0.9" fill="#ce9178" opacity=".42"/><rect x="27.35" y="18.87" width="0.67" height="0.9" fill="#569cd6" opacity=".42"/><rect x="13.34" y="20.20" width="4.67" height="0.9" fill="#569cd6" opacity=".42"/><rect x="18.68" y="20.20" width="10.01" height="0.9" fill="#9cdcfe" opacity=".42"/><rect x="29.35" y="20.20" width="5.34" height="0.9" fill="#9cdcfe" opacity=".42"/><rect x="34.68" y="20.20" width="20.68" height="0.9" fill="#ce9178" opacity=".42"/><rect x="55.36" y="20.20" width="0.67" height="0.9" fill="#569cd6" opacity=".42"/><rect x="16.01" y="21.53" width="6.00" height="0.9" fill="#569cd6" opacity=".42"/><rect x="22.01" y="21.53" width="0.67" height="0.9" fill="#569cd6" opacity=".42"/><rect x="22.68" y="21.53" width="4.00" height="0.9" fill="#9cdcfe" opacity=".42"/><rect x="26.68" y="21.53" width="6.67" height="0.9" fill="#569cd6" opacity=".42"/><rect x="33.35" y="21.53" width="0.67" height="0.9" fill="#569cd6" opacity=".42"/><rect x="13.34" y="22.87" width="5.34" height="0.9" fill="#569cd6" opacity=".42"/><rect x="18.68" y="22.87" width="0.67" height="0.9" fill="#569cd6" opacity=".42"/><rect x="10.67" y="24.20" width="3.33" height="0.9" fill="#569cd6" opacity=".42"/><rect x="14.01" y="24.20" width="0.67" height="0.9" fill="#569cd6" opacity=".42"/><rect x="8.00" y="25.53" width="4.00" height="0.9" fill="#569cd6" opacity=".42"/><rect x="12.01" y="25.53" width="0.67" height="0.9" fill="#569cd6" opacity=".42"/><rect x="5.34" y="26.87" width="3.33" height="0.9" fill="#569cd6" opacity=".42"/><rect x="8.67" y="26.87" width="0.67" height="0.9" fill="#569cd6" opacity=".42"/><rect x="2.67" y="28.20" width="3.33" height="0.9" fill="#569cd6" opacity=".42"/><rect x="6.00" y="28.20" width="0.67" height="0.9" fill="#569cd6" opacity=".42"/><rect x="2.67" y="29.53" width="2.67" height="0.9" fill="#569cd6" opacity=".42"/><rect x="6.00" y="29.53" width="4.00" height="0.9" fill="#9cdcfe" opacity=".42"/><rect x="10.01" y="29.53" width="12.01" height="0.9" fill="#ce9178" opacity=".42"/><rect x="22.01" y="29.53" width="0.67" height="0.9" fill="#569cd6" opacity=".42"/><rect x="5.34" y="30.87" width="6.67" height="0.9" fill="#569cd6" opacity=".42"/><rect x="12.67" y="30.87" width="8.67" height="0.9" fill="#9cdcfe" opacity=".42"/><rect x="21.34" y="30.87" width="8.00" height="0.9" fill="#ce9178" opacity=".42"/><rect x="30.02" y="30.87" width="4.67" height="0.9" fill="#9cdcfe" opacity=".42"/><rect x="35.35" y="30.87" width="10.67" height="0.9" fill="#9cdcfe" opacity=".42"/><rect x="46.02" y="30.87" width="12.01" height="0.9" fill="#ce9178" opacity=".42"/><rect x="58.03" y="30.87" width="0.67" height="0.9" fill="#569cd6" opacity=".42"/><rect x="8.00" y="33.53" width="8.67" height="0.9" fill="#569cd6" opacity=".42"/><rect x="17.34" y="33.53" width="4.67" height="0.9" fill="#9cdcfe" opacity=".42"/><rect x="22.01" y="33.53" width="22.01" height="0.9" fill="#ce9178" opacity=".42"/><rect x="44.69" y="33.53" width="10.01" height="0.9" fill="#9cdcfe" opacity=".42"/><rect x="54.69" y="33.53" width="13.34" height="0.9" fill="#ce9178" opacity=".42"/><rect x="68.03" y="33.53" width="0.67" height="0.9" fill="#569cd6" opacity=".42"/><rect x="10.67" y="34.87" width="8.67" height="0.9" fill="#569cd6" opacity=".42"/><rect x="20.01" y="34.87" width="4.00" height="0.9" fill="#9cdcfe" opacity=".42"/><rect x="24.01" y="34.87" width="40.02" height="0.9" fill="#ce9178" opacity=".42"/><rect x="64.03" y="34.87" width="0.67" height="0.9" fill="#569cd6" opacity=".42"/><rect x="64.70" y="34.87" width="9.34" height="0.9" fill="#569cd6" opacity=".42"/><rect x="74.04" y="34.87" width="0.67" height="0.9" fill="#569cd6" opacity=".42"/><rect x="10.67" y="36.20" width="10.67" height="0.9" fill="#569cd6" opacity=".42"/><rect x="22.01" y="36.20" width="11.34" height="0.9" fill="#9cdcfe" opacity=".42"/><rect x="34.02" y="36.20" width="10.01" height="0.9" fill="#9cdcfe" opacity=".42"/><rect x="44.02" y="36.20" width="0.67" height="0.9" fill="#569cd6" opacity=".42"/><rect x="44.69" y="36.20" width="14.67" height="0.9" fill="#9cdcfe" opacity=".42"/><rect x="59.36" y="36.20" width="11.34" height="0.9" fill="#569cd6" opacity=".42"/><rect x="70.70" y="36.20" width="0.67" height="0.9" fill="#569cd6" opacity=".42"/><rect x="13.34" y="37.53" width="8.67" height="0.9" fill="#569cd6" opacity=".42"/><rect x="22.68" y="37.53" width="5.34" height="0.9" fill="#9cdcfe" opacity=".42"/><rect x="28.01" y="37.53" width="17.34" height="0.9" fill="#ce9178" opacity=".42"/><rect x="16.01" y="38.87" width="6.00" height="0.9" fill="#9cdcfe" opacity=".42"/><rect x="22.01" y="38.87" width="26.01" height="0.9" fill="#ce9178" opacity=".42"/><rect x="24.01" y="40.20" width="6.67" height="0.9" fill="#9cdcfe" opacity=".42"/><rect x="30.68" y="40.20" width="18.01" height="0.9" fill="#ce9178" opacity=".42"/><rect x="48.69" y="40.20" width="0.67" height="0.9" fill="#569cd6" opacity=".42"/><rect x="24.01" y="41.53" width="9.34" height="0.9" fill="#569cd6" opacity=".42"/><rect x="33.35" y="41.53" width="0.67" height="0.9" fill="#569cd6" opacity=".42"/><rect x="16.01" y="42.87" width="6.67" height="0.9" fill="#569cd6" opacity=".42"/><rect x="22.68" y="42.87" width="0.67" height="0.9" fill="#569cd6" opacity=".42"/><rect x="13.34" y="44.20" width="8.67" height="0.9" fill="#569cd6" opacity=".42"/><rect x="22.01" y="44.20" width="0.67" height="0.9" fill="#569cd6" opacity=".42"/><rect x="10.67" y="45.53" width="9.34" height="0.9" fill="#569cd6" opacity=".42"/><rect x="20.01" y="45.53" width="0.67" height="0.9" fill="#569cd6" opacity=".42"/><rect x="10.67" y="46.87" width="8.00" height="0.9" fill="#569cd6" opacity=".42"/><rect x="19.34" y="46.87" width="4.67" height="0.9" fill="#9cdcfe" opacity=".42"/><rect x="24.01" y="46.87" width="0.67" height="0.9" fill="#569cd6" opacity=".42"/><rect x="13.34" y="48.20" width="10.67" height="0.9" fill="#569cd6" opacity=".42"/><rect x="24.68" y="48.20" width="11.34" height="0.9" fill="#9cdcfe" opacity=".42"/><rect x="36.69" y="48.20" width="10.01" height="0.9" fill="#9cdcfe" opacity=".42"/><rect x="46.69" y="48.20" width="0.67" height="0.9" fill="#569cd6" opacity=".42"/><rect x="47.36" y="48.20" width="14.67" height="0.9" fill="#9cdcfe" opacity=".42"/><rect x="62.03" y="48.20" width="11.34" height="0.9" fill="#569cd6" opacity=".42"/><rect x="73.37" y="48.20" width="0.67" height="0.9" fill="#569cd6" opacity=".42"/><rect x="16.01" y="49.53" width="3.33" height="0.9" fill="#569cd6" opacity=".42"/><rect x="19.34" y="49.53" width="0.67" height="0.9" fill="#569cd6" opacity=".42"/><rect x="20.01" y="49.53" width="18.01" height="0.9" fill="#9cdcfe" opacity=".42"/><rect x="38.02" y="49.53" width="4.00" height="0.9" fill="#569cd6" opacity=".42"/><rect x="42.02" y="49.53" width="0.67" height="0.9" fill="#569cd6" opacity=".42"/><rect x="13.34" y="50.87" width="6.67" height="0.9" fill="#569cd6" opacity=".42"/><rect x="20.01" y="50.87" width="0.67" height="0.9" fill="#569cd6" opacity=".42"/><rect x="10.67" y="52.20" width="8.67" height="0.9" fill="#569cd6" opacity=".42"/><rect x="19.34" y="52.20" width="0.67" height="0.9" fill="#569cd6" opacity=".42"/><rect x="8.00" y="53.53" width="9.34" height="0.9" fill="#569cd6" opacity=".42"/><rect x="17.34" y="53.53" width="0.67" height="0.9" fill="#569cd6" opacity=".42"/><rect x="8.00" y="56.20" width="10.01" height="0.9" fill="#569cd6" opacity=".42"/><rect x="18.68" y="56.20" width="11.34" height="0.9" fill="#9cdcfe" opacity=".42"/><rect x="30.02" y="56.20" width="12.01" height="0.9" fill="#ce9178" opacity=".42"/><rect x="42.02" y="56.20" width="0.67" height="0.9" fill="#569cd6" opacity=".42"/><rect x="42.69" y="56.20" width="10.67" height="0.9" fill="#569cd6" opacity=".42"/><rect x="53.36" y="56.20" width="0.67" height="0.9" fill="#569cd6" opacity=".42"/><rect x="8.00" y="57.53" width="5.34" height="0.9" fill="#569cd6" opacity=".42"/><rect x="14.01" y="57.53" width="7.34" height="0.9" fill="#9cdcfe" opacity=".42"/><rect x="21.34" y="57.53" width="24.68" height="0.9" fill="#ce9178" opacity=".42"/><rect x="46.02" y="57.53" width="0.67" height="0.9" fill="#569cd6" opacity=".42"/><rect x="46.69" y="57.53" width="6.00" height="0.9" fill="#569cd6" opacity=".42"/><rect x="52.69" y="57.53" width="0.67" height="0.9" fill="#569cd6" opacity=".42"/><rect x="5.34" y="58.87" width="7.34" height="0.9" fill="#569cd6" opacity=".42"/><rect x="12.67" y="58.87" width="0.67" height="0.9" fill="#569cd6" opacity=".42"/><rect x="5.34" y="60.20" width="9.34" height="0.9" fill="#569cd6" opacity=".42"/><rect x="15.34" y="60.20" width="12.01" height="0.9" fill="#9cdcfe" opacity=".42"/><rect x="27.35" y="60.20" width="8.67" height="0.9" fill="#ce9178" opacity=".42"/><rect x="36.69" y="60.20" width="13.34" height="0.9" fill="#9cdcfe" opacity=".42"/><rect x="50.03" y="60.20" width="0.67" height="0.9" fill="#569cd6" opacity=".42"/><rect x="50.69" y="60.20" width="10.01" height="0.9" fill="#569cd6" opacity=".42"/><rect x="60.70" y="60.20" width="0.67" height="0.9" fill="#569cd6" opacity=".42"/><rect x="2.67" y="61.53" width="3.33" height="0.9" fill="#569cd6" opacity=".42"/><rect x="6.00" y="61.53" width="0.67" height="0.9" fill="#569cd6" opacity=".42"/><rect x="2.67" y="62.87" width="2.67" height="0.9" fill="#569cd6" opacity=".42"/><rect x="5.34" y="62.87" width="0.67" height="0.9" fill="#569cd6" opacity=".42"/><rect x="5.34" y="64.20" width="4.67" height="0.9" fill="#569cd6" opacity=".42"/><rect x="10.67" y="64.20" width="6.67" height="0.9" fill="#9cdcfe" opacity=".42"/><rect x="18.01" y="64.20" width="5.34" height="0.9" fill="#9cdcfe" opacity=".42"/><rect x="23.34" y="64.20" width="8.67" height="0.9" fill="#ce9178" opacity=".42"/><rect x="32.02" y="64.20" width="0.67" height="0.9" fill="#569cd6" opacity=".42"/><rect x="32.68" y="64.20" width="4.00" height="0.9" fill="#9cdcfe" opacity=".42"/><rect x="36.69" y="64.20" width="5.34" height="0.9" fill="#569cd6" opacity=".42"/><rect x="42.02" y="64.20" width="0.67" height="0.9" fill="#569cd6" opacity=".42"/><rect x="5.34" y="65.53" width="4.67" height="0.9" fill="#569cd6" opacity=".42"/><rect x="10.67" y="65.53" width="6.67" height="0.9" fill="#9cdcfe" opacity=".42"/><rect x="18.01" y="65.53" width="12.67" height="0.9" fill="#9cdcfe" opacity=".42"/><rect x="30.68" y="65.53" width="13.34" height="0.9" fill="#ce9178" opacity=".42"/><rect x="44.69" y="65.53" width="10.01" height="0.9" fill="#9cdcfe" opacity=".42"/><rect x="54.69" y="65.53" width="0.67" height="0.9" fill="#569cd6" opacity=".42"/><rect x="55.36" y="65.53" width="1.33" height="0.9" fill="#9cdcfe" opacity=".42"/><rect x="56.70" y="65.53" width="5.34" height="0.9" fill="#569cd6" opacity=".42"/><rect x="62.03" y="65.53" width="0.67" height="0.9" fill="#569cd6" opacity=".42"/><rect x="2.67" y="66.87" width="3.33" height="0.9" fill="#569cd6" opacity=".42"/><rect x="6.00" y="66.87" width="0.67" height="0.9" fill="#569cd6" opacity=".42"/><rect x="0.00" y="68.20" width="3.33" height="0.9" fill="#569cd6" opacity=".42"/><rect x="3.33" y="68.20" width="0.67" height="0.9" fill="#569cd6" opacity=".42"/><rect x="0.00" y="70.86" width="8.00" height="0.9" fill="#569cd6" opacity=".42"/><rect x="8.67" y="70.86" width="4.67" height="0.9" fill="#9cdcfe" opacity=".42"/><rect x="13.34" y="70.86" width="0.67" height="0.9" fill="#569cd6" opacity=".42"/><rect x="2.67" y="72.20" width="2.67" height="0.9" fill="#569cd6" opacity=".42"/><rect x="5.34" y="72.20" width="0.67" height="0.9" fill="#569cd6" opacity=".42"/><rect x="5.34" y="73.53" width="6.00" height="0.9" fill="#569cd6" opacity=".42"/><rect x="12.01" y="73.53" width="8.00" height="0.9" fill="#9cdcfe" opacity=".42"/><rect x="20.01" y="73.53" width="6.00" height="0.9" fill="#ce9178" opacity=".42"/><rect x="26.01" y="73.53" width="0.67" height="0.9" fill="#569cd6" opacity=".42"/><rect x="2.67" y="74.86" width="3.33" height="0.9" fill="#569cd6" opacity=".42"/><rect x="6.00" y="74.86" width="0.67" height="0.9" fill="#569cd6" opacity=".42"/><rect x="0.00" y="76.20" width="8.67" height="0.9" fill="#569cd6" opacity=".42"/><rect x="8.67" y="76.20" width="0.67" height="0.9" fill="#569cd6" opacity=".42"/><rect x="10.67" y="77.53" width="9.34" height="0.9" fill="#569cd6" opacity=".42"/><rect x="20.01" y="77.53" width="0.67" height="0.9" fill="#569cd6" opacity=".42"/><rect x="10.67" y="78.86" width="9.34" height="0.9" fill="#569cd6" opacity=".42"/><rect x="20.68" y="78.86" width="12.01" height="0.9" fill="#9cdcfe" opacity=".42"/><rect x="32.68" y="78.86" width="8.67" height="0.9" fill="#ce9178" opacity=".42"/><rect x="42.02" y="78.86" width="13.34" height="0.9" fill="#9cdcfe" opacity=".42"/><rect x="55.36" y="78.86" width="0.67" height="0.9" fill="#569cd6" opacity=".42"/><rect x="56.03" y="78.86" width="10.01" height="0.9" fill="#569cd6" opacity=".42"/><rect x="66.03" y="78.86" width="0.67" height="0.9" fill="#569cd6" opacity=".42"/><rect x="13.34" y="80.20" width="3.33" height="0.9" fill="#569cd6" opacity=".42"/><rect x="16.68" y="80.20" width="0.67" height="0.9" fill="#569cd6" opacity=".42"/><rect x="17.34" y="80.20" width="18.01" height="0.9" fill="#9cdcfe" opacity=".42"/><rect x="35.35" y="80.20" width="4.00" height="0.9" fill="#569cd6" opacity=".42"/><rect x="39.35" y="80.20" width="0.67" height="0.9" fill="#569cd6" opacity=".42"/><rect x="5.34" y="81.53" width="10.67" height="0.9" fill="#569cd6" opacity=".42"/><rect x="16.68" y="81.53" width="11.34" height="0.9" fill="#9cdcfe" opacity=".42"/><rect x="28.68" y="81.53" width="10.01" height="0.9" fill="#9cdcfe" opacity=".42"/><rect x="38.69" y="81.53" width="0.67" height="0.9" fill="#569cd6" opacity=".42"/><rect x="39.35" y="81.53" width="14.67" height="0.9" fill="#9cdcfe" opacity=".42"/><rect x="54.03" y="81.53" width="11.34" height="0.9" fill="#569cd6" opacity=".42"/><rect x="65.37" y="81.53" width="0.67" height="0.9" fill="#569cd6" opacity=".42"/><rect x="13.34" y="82.86" width="4.67" height="0.9" fill="#569cd6" opacity=".42"/><rect x="18.68" y="82.86" width="6.67" height="0.9" fill="#9cdcfe" opacity=".42"/><rect x="26.01" y="82.86" width="5.34" height="0.9" fill="#9cdcfe" opacity=".42"/><rect x="31.35" y="82.86" width="8.67" height="0.9" fill="#ce9178" opacity=".42"/><rect x="40.02" y="82.86" width="0.67" height="0.9" fill="#569cd6" opacity=".42"/><rect x="40.69" y="82.86" width="4.00" height="0.9" fill="#9cdcfe" opacity=".42"/><rect x="44.69" y="82.86" width="5.34" height="0.9" fill="#569cd6" opacity=".42"/><rect x="50.03" y="82.86" width="0.67" height="0.9" fill="#569cd6" opacity=".42"/><rect x="13.34" y="84.20" width="10.67" height="0.9" fill="#569cd6" opacity=".42"/><rect x="24.68" y="84.20" width="11.34" height="0.9" fill="#9cdcfe" opacity=".42"/><rect x="36.69" y="84.20" width="10.01" height="0.9" fill="#9cdcfe" opacity=".42"/><rect x="46.69" y="84.20" width="0.67" height="0.9" fill="#569cd6" opacity=".42"/><rect x="47.36" y="84.20" width="14.67" height="0.9" fill="#9cdcfe" opacity=".42"/><rect x="62.03" y="84.20" width="11.34" height="0.9" fill="#569cd6" opacity=".42"/><rect x="73.37" y="84.20" width="0.67" height="0.9" fill="#569cd6" opacity=".42"/><rect x="2.67" y="85.53" width="9.34" height="0.9" fill="#569cd6" opacity=".42"/><rect x="12.67" y="85.53" width="12.01" height="0.9" fill="#9cdcfe" opacity=".42"/><rect x="24.68" y="85.53" width="8.67" height="0.9" fill="#ce9178" opacity=".42"/><rect x="34.02" y="85.53" width="13.34" height="0.9" fill="#9cdcfe" opacity=".42"/><rect x="47.36" y="85.53" width="0.67" height="0.9" fill="#569cd6" opacity=".42"/><rect x="48.02" y="85.53" width="10.01" height="0.9" fill="#569cd6" opacity=".42"/><rect x="58.03" y="85.53" width="0.67" height="0.9" fill="#569cd6" opacity=".42"/><rect x="8.00" y="86.86" width="8.67" height="0.9" fill="#569cd6" opacity=".42"/><rect x="16.68" y="86.86" width="0.67" height="0.9" fill="#569cd6" opacity=".42"/><rect x="2.67" y="88.20" width="9.34" height="0.9" fill="#569cd6" opacity=".42"/><rect x="12.01" y="88.20" width="0.67" height="0.9" fill="#569cd6" opacity=".42"/><rect x="2.67" y="89.53" width="5.34" height="0.9" fill="#569cd6" opacity=".42"/><rect x="8.67" y="89.53" width="7.34" height="0.9" fill="#9cdcfe" opacity=".42"/><rect x="16.01" y="89.53" width="24.68" height="0.9" fill="#ce9178" opacity=".42"/><rect x="40.69" y="89.53" width="0.67" height="0.9" fill="#569cd6" opacity=".42"/><rect x="41.35" y="89.53" width="6.00" height="0.9" fill="#569cd6" opacity=".42"/><rect x="47.36" y="89.53" width="0.67" height="0.9" fill="#569cd6" opacity=".42"/><rect x="10.67" y="90.86" width="10.67" height="0.9" fill="#569cd6" opacity=".42"/><rect x="22.01" y="90.86" width="11.34" height="0.9" fill="#9cdcfe" opacity=".42"/><rect x="34.02" y="90.86" width="10.01" height="0.9" fill="#9cdcfe" opacity=".42"/><rect x="44.02" y="90.86" width="0.67" height="0.9" fill="#569cd6" opacity=".42"/><rect x="44.69" y="90.86" width="14.67" height="0.9" fill="#9cdcfe" opacity=".42"/><rect x="59.36" y="90.86" width="11.34" height="0.9" fill="#569cd6" opacity=".42"/><rect x="70.70" y="90.86" width="0.67" height="0.9" fill="#569cd6" opacity=".42"/><rect x="13.34" y="92.20" width="2.67" height="0.9" fill="#569cd6" opacity=".42"/><rect x="16.01" y="92.20" width="0.67" height="0.9" fill="#569cd6" opacity=".42"/><rect x="13.34" y="93.53" width="6.00" height="0.9" fill="#569cd6" opacity=".42"/><rect x="20.01" y="93.53" width="8.00" height="0.9" fill="#9cdcfe" opacity=".42"/><rect x="28.01" y="93.53" width="6.00" height="0.9" fill="#ce9178" opacity=".42"/><rect x="34.02" y="93.53" width="0.67" height="0.9" fill="#569cd6" opacity=".42"/><rect x="2.67" y="94.86" width="3.33" height="0.9" fill="#569cd6" opacity=".42"/><rect x="6.00" y="94.86" width="0.67" height="0.9" fill="#569cd6" opacity=".42"/><rect x="5.34" y="96.20" width="6.00" height="0.9" fill="#9cdcfe" opacity=".42"/><rect x="11.34" y="96.20" width="26.01" height="0.9" fill="#ce9178" opacity=".42"/><rect x="13.34" y="97.53" width="2.67" height="0.9" fill="#569cd6" opacity=".42"/><rect x="16.01" y="97.53" width="0.67" height="0.9" fill="#569cd6" opacity=".42"/><rect x="10.67" y="98.86" width="6.67" height="0.9" fill="#569cd6" opacity=".42"/><rect x="17.34" y="98.86" width="0.67" height="0.9" fill="#569cd6" opacity=".42"/><rect x="10.67" y="100.20" width="3.33" height="0.9" fill="#569cd6" opacity=".42"/><rect x="14.01" y="100.20" width="0.67" height="0.9" fill="#569cd6" opacity=".42"/><rect x="14.67" y="100.20" width="18.01" height="0.9" fill="#9cdcfe" opacity=".42"/><rect x="32.68" y="100.20" width="4.00" height="0.9" fill="#569cd6" opacity=".42"/><rect x="36.69" y="100.20" width="0.67" height="0.9" fill="#569cd6" opacity=".42"/><rect x="5.34" y="101.53" width="4.67" height="0.9" fill="#569cd6" opacity=".42"/><rect x="10.67" y="101.53" width="6.67" height="0.9" fill="#9cdcfe" opacity=".42"/><rect x="18.01" y="101.53" width="12.67" height="0.9" fill="#9cdcfe" opacity=".42"/><rect x="30.68" y="101.53" width="13.34" height="0.9" fill="#ce9178" opacity=".42"/><rect x="44.69" y="101.53" width="10.01" height="0.9" fill="#9cdcfe" opacity=".42"/><rect x="54.69" y="101.53" width="0.67" height="0.9" fill="#569cd6" opacity=".42"/><rect x="55.36" y="101.53" width="1.33" height="0.9" fill="#9cdcfe" opacity=".42"/><rect x="56.70" y="101.53" width="5.34" height="0.9" fill="#569cd6" opacity=".42"/><rect x="62.03" y="101.53" width="0.67" height="0.9" fill="#569cd6" opacity=".42"/><rect x="5.34" y="102.86" width="9.34" height="0.9" fill="#569cd6" opacity=".42"/><rect x="14.67" y="102.86" width="0.67" height="0.9" fill="#569cd6" opacity=".42"/><rect x="10.67" y="104.20" width="2.67" height="0.9" fill="#569cd6" opacity=".42"/><rect x="13.34" y="104.20" width="0.67" height="0.9" fill="#569cd6" opacity=".42"/><rect x="2.67" y="105.53" width="9.34" height="0.9" fill="#569cd6" opacity=".42"/><rect x="12.67" y="105.53" width="12.01" height="0.9" fill="#9cdcfe" opacity=".42"/><rect x="24.68" y="105.53" width="8.67" height="0.9" fill="#ce9178" opacity=".42"/><rect x="34.02" y="105.53" width="13.34" height="0.9" fill="#9cdcfe" opacity=".42"/><rect x="47.36" y="105.53" width="0.67" height="0.9" fill="#569cd6" opacity=".42"/><rect x="48.02" y="105.53" width="10.01" height="0.9" fill="#569cd6" opacity=".42"/><rect x="58.03" y="105.53" width="0.67" height="0.9" fill="#569cd6" opacity=".42"/><rect x="8.00" y="106.86" width="7.34" height="0.9" fill="#569cd6" opacity=".42"/><rect x="15.34" y="106.86" width="0.67" height="0.9" fill="#569cd6" opacity=".42"/><rect x="13.34" y="108.20" width="6.00" height="0.9" fill="#569cd6" opacity=".42"/><rect x="20.01" y="108.20" width="8.00" height="0.9" fill="#9cdcfe" opacity=".42"/><rect x="28.01" y="108.20" width="6.00" height="0.9" fill="#ce9178" opacity=".42"/><rect x="34.02" y="108.20" width="0.67" height="0.9" fill="#569cd6" opacity=".42"/><rect x="8.00" y="109.53" width="6.67" height="0.9" fill="#569cd6" opacity=".42"/><rect x="14.67" y="109.53" width="0.67" height="0.9" fill="#569cd6" opacity=".42"/><rect x="5.34" y="110.86" width="4.67" height="0.9" fill="#569cd6" opacity=".42"/><rect x="10.67" y="110.86" width="6.67" height="0.9" fill="#9cdcfe" opacity=".42"/><rect x="18.01" y="110.86" width="12.67" height="0.9" fill="#9cdcfe" opacity=".42"/><rect x="30.68" y="110.86" width="13.34" height="0.9" fill="#ce9178" opacity=".42"/><rect x="44.69" y="110.86" width="10.01" height="0.9" fill="#9cdcfe" opacity=".42"/><rect x="54.69" y="110.86" width="0.67" height="0.9" fill="#569cd6" opacity=".42"/><rect x="55.36" y="110.86" width="1.33" height="0.9" fill="#9cdcfe" opacity=".42"/><rect x="56.70" y="110.86" width="5.34" height="0.9" fill="#569cd6" opacity=".42"/><rect x="62.03" y="110.86" width="0.67" height="0.9" fill="#569cd6" opacity=".42"/><rect x="8.00" y="112.20" width="2.67" height="0.9" fill="#569cd6" opacity=".42"/><rect x="10.67" y="112.20" width="0.67" height="0.9" fill="#569cd6" opacity=".42"/><rect x="2.67" y="113.53" width="3.33" height="0.9" fill="#569cd6" opacity=".42"/><rect x="6.00" y="113.53" width="0.67" height="0.9" fill="#569cd6" opacity=".42"/><rect x="6.67" y="113.53" width="18.01" height="0.9" fill="#9cdcfe" opacity=".42"/><rect x="24.68" y="113.53" width="4.00" height="0.9" fill="#569cd6" opacity=".42"/><rect x="28.68" y="113.53" width="0.67" height="0.9" fill="#569cd6" opacity=".42"/><rect x="2.67" y="114.86" width="5.34" height="0.9" fill="#569cd6" opacity=".42"/><rect x="8.67" y="114.86" width="7.34" height="0.9" fill="#9cdcfe" opacity=".42"/><rect x="16.01" y="114.86" width="24.68" height="0.9" fill="#ce9178" opacity=".42"/><rect x="40.69" y="114.86" width="0.67" height="0.9" fill="#569cd6" opacity=".42"/><rect x="41.35" y="114.86" width="6.00" height="0.9" fill="#569cd6" opacity=".42"/><rect x="47.36" y="114.86" width="0.67" height="0.9" fill="#569cd6" opacity=".42"/><rect x="2.67" y="116.20" width="9.34" height="0.9" fill="#569cd6" opacity=".42"/><rect x="12.01" y="116.20" width="0.67" height="0.9" fill="#569cd6" opacity=".42"/></svg>
<div class="abs" style="left:1013.500px;top:0.600px;width:11.500px;height:101px;background:#424242"></div>
</div><div id="panel" class="abs">
<span class="t" style="left:16.75px;top:9.85px;font-size:9.90px;color:#969696;letter-spacing:-0.250px;transform:scaleX(0.8488);transform-origin:0 50%">PROBLEMS</span>
<span class="t" style="left:81.50px;top:9.85px;font-size:9.90px;color:#969696;letter-spacing:-0.250px;transform:scaleX(0.8674);transform-origin:0 50%">OUTPUT</span>
<span class="t" style="left:136.00px;top:9.85px;font-size:9.90px;color:#e7e7e7;letter-spacing:-0.250px;transform:scaleX(0.8844);transform-origin:0 50%">TERMINAL</span>
<span class="t" style="left:198.80px;top:9.85px;font-size:9.90px;color:#969696;letter-spacing:-0.250px;transform:scaleX(0.8554);transform-origin:0 50%">DEBUG CONSOLE</span>
<div class="abs" style="left:135.00px;top:27.70px;width:46px;height:1px;background:#e7e7e7"></div>
<div class="abs" style="left:754.80px;top:5.80px;width:142.2px;height:18.7px;background:#3c3c3c"></div>
<span class="t" style="left:763.00px;top:10.19px;font-size:10.83px;color:#f0f0f0;letter-spacing:-0.062px">1: node</span>
<svg class="abs" style="left:881.30px;top:11.50px" width="10" height="7" viewBox="0 0 10 7"><path d="M1 1.500l4 4 4-4" fill="none" stroke="#c5c5c5" stroke-width="1"/></svg>
<svg class="abs" style="left:895.00px;top:7.00px" width="130" height="16" viewBox="0 0 130 16"><g fill="none" stroke="#c5c5c5" stroke-width="1"><path d="M13.4 2.500v11M7.9 8h11"/><path d="M23.6 6.500l2.800 2.800 2.800-2.800"/><rect x="40.7" y="3" width="10.500" height="10" rx="1"/><path d="M46.0 3v10"/><path d="M62.0 4.500h10M65.0 4.500v-1.500h4v1.500M63.5 4.500l.6 9h5.800l.6-9M65.8 6.500v5M68.2 6.500v5"/><path d="M85.7 10l3.700-3.700 3.700 3.700"/><path d="M107.0 4.500l7 7M114.0 4.500l-7 7"/></g></svg>
<div class="tl" style="top:31.93px"><span style="color:#3b8eea">i</span> <span style="color:#767676;display:inline-block;width:30px;text-align:center">｢wdm｣</span>: Compiled successfully.</div>
<div class="tl" style="top:45.27px"><span style="color:#3b8eea">i</span> <span style="color:#767676;display:inline-block;width:30px;text-align:center">｢wdm｣</span>: Compiling...</div>
<div class="tl" style="top:58.60px"><b>95% emitting CopyPlugin</b><span style="color:#3b8eea">i</span> <span style="color:#767676;display:inline-block;width:30px;text-align:center">｢wdm｣</span>: wait until bundle finished: /favicon.ico</div>
<div class="tl" style="top:85.27px">Date: <b>2021-06-21T10:21:49.698Z</b> - Hash: <b>44ececc0b53d821800a8</b></div>
<div class="tl" style="top:98.60px">5 unchanged chunks</div>
<div class="tl" style="top:111.93px">chunk {<b style="color:#f5f543">main</b>} <b style="color:#23d18b">main.js, main.js.map</b> (main) 2.19 MB <b style="color:#f5f543">[initial]</b> <b style="color:#23d18b">[rendered]</b></div>
<div class="tl" style="top:125.27px">Time: <b>1199</b>ms</div>
<div class="tl" style="top:138.60px"><span style="color:#3b8eea">i</span> <span style="color:#767676;display:inline-block;width:30px;text-align:center">｢wdm｣</span>: Compiled successfully.</div>
<div class="abs" style="left:15.80px;top:152.00px;width:6px;height:11.800px;border:1px solid #c8c8c8"></div>
</div>
<div id="status" class="abs">
<svg class="abs" style="left:11.900px;top:3.70px" width="36" height="12" viewBox="0 0 36 12"><g fill="none" stroke="#fff" stroke-width="1"><circle cx="6" cy="6" r="4.900"/><path d="M4 4l4 4M8 4l-4 4"/><path d="M28.500 1.200l5 9.300h-10z" stroke-linejoin="round"/><path d="M28.500 4.500v3M28.500 8.300v1.200"/></g></svg>
<span class="t" style="left:26.80px;top:4.28px;font-size:10.83px;color:#fff;letter-spacing:-1.023px">0</span>
<span class="t" style="left:49.30px;top:4.28px;font-size:10.83px;color:#fff;letter-spacing:-0.523px">0</span>
<span class="t" style="left:799.40px;top:4.28px;font-size:10.83px;color:#fff;letter-spacing:-0.250px;transform:scaleX(0.9379);transform-origin:0 50%">Ln 1, Col 1 (45 selected)</span>
<span class="t" style="left:917.60px;top:4.28px;font-size:10.83px;color:#fff;letter-spacing:-0.250px;transform:scaleX(0.8864);transform-origin:0 50%">Spaces: 4</span>
<span class="t" style="left:971.70px;top:4.28px;font-size:10.83px;color:#fff;letter-spacing:-0.250px;transform:scaleX(0.8936);transform-origin:0 50%">UTF-8</span>
<span class="t" style="left:1011.90px;top:4.28px;font-size:10.83px;color:#fff;letter-spacing:-2.069px">LF</span>
<span class="t" style="left:1034.20px;top:4.28px;font-size:10.83px;color:#fff;letter-spacing:-0.250px;transform:scaleX(0.8988);transform-origin:0 50%">HTML</span>
<span class="t" style="left:1088.20px;top:4.28px;font-size:10.83px;color:#fff;letter-spacing:-0.250px;transform:scaleX(0.9136);transform-origin:0 50%">Go Live</span>
<span class="t" style="left:1148.60px;top:4.28px;font-size:10.83px;color:#fff;letter-spacing:-0.250px;transform:scaleX(0.9556);transform-origin:0 50%">Setup Azure Git</span>
<svg class="abs" style="left:1074px;top:3.70px" width="12" height="12" viewBox="0 0 12 12"><g fill="none" stroke="#fff" stroke-width="1.100"><circle cx="6" cy="4.800" r="1.200" fill="#fff"/><path d="M3.900 7.200a3.100 3.100 0 1 1 4.200 0M2.600 8.800a5 5 0 1 1 6.800 0M6 6v5.800"/></g></svg>
<svg class="abs" style="left:1133.700px;top:3.40px" width="12" height="12" viewBox="0 0 12 12"><g fill="none" stroke="#fff" stroke-width="1"><rect x="1" y="3.500" width="10" height="7.500" rx=".5"/><path d="M6 3.500v7.500M3.200 3.500c-.5-3 2.800-3 2.800 0 0-3 3.300-3 2.800 0"/></g></svg>
<svg class="abs" style="left:1230.500px;top:3.70px" width="13" height="12" viewBox="0 0 13 12"><g fill="none" stroke="#fff" stroke-width="1"><path d="M4.500 1h8v6h-2.500l-1.500 1.500"/><circle cx="4.800" cy="5" r="2"/><path d="M1 11.500c.4-2.800 1.800-3.800 3.800-3.800s3.400 1 3.800 3.800"/></g></svg>
<svg class="abs" style="left:1256.500px;top:3.40px" width="12" height="12" viewBox="0 0 12 12"><g fill="none" stroke="#fff" stroke-width="1.100"><path d="M2.500 9v-4a3.500 3.500 0 0 1 7 0v4l1 .6h-9zM4.800 10.300a1.200 1.200 0 0 0 2.400 0"/></g></svg>
</div>
<div id="taskbar" class="abs">
<div class="abs" style="left:0;top:0;width:40px;height:33.600px;background:#1f3139"></div>
<svg class="abs" style="left:13px;top:10.00px" width="14" height="13.500" viewBox="0 0 14 14" preserveAspectRatio="none"><path d="M0 2l6-.9v5.600h-6zM6.800 1l7.200-1v6.700h-7.200zM0 7.500h6v5.600l-6-.9zM6.800 7.500h7.200v6.500l-7.200-1z" fill="#ffffff"/></svg>
<div class="abs" style="left:40px;top:0.500px;width:287px;height:32.800px;background:#f3f3f3;border:1px solid #dcdcdc"></div>
<svg class="abs" style="left:49px;top:8.80px" width="16" height="16" viewBox="0 0 16 16"><g fill="none" stroke="#2b2b2b" stroke-width="1.200"><circle cx="9.800" cy="6" r="4.600"/><path d="M6.500 9.300l-5.600 5.600"/></g></svg>
<span class="t" style="left:74.00px;top:11.75px;font-size:12.30px;color:#454545;letter-spacing:-0.095px">Введите здесь текст для поиска</span>
<svg class="abs" style="left:338.500px;top:9.00px" width="16" height="16" viewBox="0 0 16 16"><circle cx="8" cy="8" r="5.700" fill="none" stroke="#fff" stroke-width="2.100"/></svg>
<svg class="abs" style="left:378.500px;top:9.50px" width="17" height="15" viewBox="0 0 17 15"><g fill="none" stroke="#fff" stroke-width="1.100"><rect x="1.500" y="4" width="8" height="7"/><path d="M1 1.500h9M1 13.500h9M1.500 1v2M9.500 1v2M1.500 12v2M9.500 12v2M13.800 1v13M12.500 7.500h2.600"/></g></svg>
<svg class="abs" style="left:418.700px;top:8.50px" width="20" height="17" viewBox="0 0 20 17"><path d="M1 1h6.500l1.500 2h10v3h-18z" fill="#e9a72a"/><rect x="1" y="4.500" width="18" height="11.500" fill="#fbd25e"/><rect x="5" y="10" width="10" height="6" fill="#3b8bd6"/><rect x="7" y="12" width="6" height="4" fill="#fbd25e"/></svg>
<svg class="abs" style="left:460.500px;top:6.50px" width="19" height="20" viewBox="0 0 19 20"><path d="M6 6v-2.500a3.500 3.500 0 0 1 7 0v2.500" fill="none" stroke="#e8e8e8" stroke-width="1.300"/><rect x="1" y="6" width="17" height="13" fill="#f2f2f2"/><rect x="6" y="9" width="3" height="3" fill="#f25022"/><rect x="10" y="9" width="3" height="3" fill="#7fba00"/><rect x="6" y="13" width="3" height="3" fill="#00a4ef"/><rect x="10" y="13" width="3" height="3" fill="#ffb900"/></svg>
<svg class="abs" style="left:501px;top:7.50px" width="22" height="18" viewBox="0 0 22 18"><path d="M1 7l10-6.500 10 6.500v10h-20z" fill="#1a86d8"/><path d="M3 5h16v8h-16z" fill="#ffffff"/><path d="M1 7l10 6.500 10-6.500v10.500h-20z" fill="#35a4ee"/></svg>
<svg class="abs" style="left:543px;top:7.50px" width="19" height="19" viewBox="0 0 20 20"><circle cx="10" cy="10" r="9.500" fill="#ea4335"/><path d="M10 10L1.800 5.200A9.500 9.500 0 0 0 9 19.450z" fill="#34a853"/><path d="M10 10l-1 9.450A9.500 9.500 0 0 0 18.500 5.500H10z" fill="#fbbc05"/><circle cx="10" cy="10" r="4.300" fill="#fff"/><circle cx="10" cy="10" r="3.400" fill="#4285f4"/></svg>
<svg class="abs" style="left:585px;top:7.50px" width="20" height="19" viewBox="0 0 20 19"><path d="M14 .5l5.500 2.500v13l-5.500 2.500-8.500-7.500-3.500 2.700-1.500-.8v-7l1.500-.8 3.500 2.700zM14 5.500l-5 4 5 4zM2 7.500v4l2-2z" fill="#9b5fd0" fill-rule="evenodd"/></svg>
<div class="abs" style="left:616px;top:0;width:39.500px;height:33.600px;background:#45525c"></div>
<svg class="abs" style="left:626px;top:7.00px" width="20" height="20" viewBox="0 0 100 100"><path d="M71 2 L96 14 V86 L71 98 L28 59 L10 73 L3 69 V31 L10 27 L28 41 Z M71 28 L40 50 L71 72 Z" fill="#2aa8f2" fill-rule="evenodd"/></svg>
<div class="abs" style="left:666px;top:7.00px;width:20px;height:20px;border-radius:8px;background:#12a5e8"></div><span class="t" style="left:666.00px;top:10.30px;font-size:14.00px;color:#fff;font-weight:bold;width:20px;text-align:center">S</span>
<div class="abs" style="left:707.500px;top:6.50px;width:20px;height:20px;border-radius:10px;background:#2ea6de"></div>
<svg class="abs" style="left:707.500px;top:6.50px" width="20" height="20" viewBox="0 0 20 20"><path d="M4 9.800l11-4.500-1.800 9.500-3.500-2.700-1.800 1.800-.3-3 5-4.300-6.200 3.800z" fill="#fff"/></svg>
<div class="abs" style="left:719px;top:18.50px;width:13px;height:9.500px;border-radius:5px;background:#e0392b"></div><span class="t" style="left:719.00px;top:20.15px;font-size:6.50px;color:#fff;width:13px;text-align:center">90</span>
<div class="abs" style="left:537px;top:31.500px;width:33px;height:1.800px;background:#7db8e8"></div>
<div class="abs" style="left:578px;top:31.500px;width:33px;height:1.800px;background:#7db8e8"></div>
<div class="abs" style="left:616px;top:31.500px;width:39.5px;height:1.800px;background:#7db8e8"></div>
<div class="abs" style="left:660px;top:31.500px;width:33px;height:1.800px;background:#7db8e8"></div>
<div class="abs" style="left:701px;top:31.500px;width:33px;height:1.800px;background:#7db8e8"></div>
<svg class="abs" style="left:1112.500px;top:13.10px" width="12" height="8" viewBox="0 0 12 8"><path d="M1 6.500l5-5 5 5" fill="none" stroke="#fff" stroke-width="1.100"/></svg>
<svg class="abs" style="left:1131.500px;top:10.60px" width="16" height="13" viewBox="0 0 16 13"><g fill="none" stroke="#fff" stroke-width="1"><path d="M1 4.500h2.500l3-3v10l-3-3h-2.500z"/><path d="M8.500 4.500a3 3 0 0 1 0 4M10.500 3a5 5 0 0 1 0 7" opacity=".9"/><path d="M12.500 1.500a7.500 7.500 0 0 1 0 10" opacity=".45"/></g></svg>
<span class="t" style="left:1154.40px;top:12.70px;font-size:9.80px;color:#fff;letter-spacing:-0.250px;transform:scaleX(0.9323);transform-origin:0 50%">ENG</span>
<span class="t" style="left:1196.00px;top:4.65px;font-size:9.70px;color:#fff;letter-spacing:-0.250px;transform:scaleX(0.9555);transform-origin:0 50%">13:24</span>
<span class="t" style="left:1184.40px;top:19.95px;font-size:9.70px;color:#fff;letter-spacing:-0.250px;transform:scaleX(0.9859);transform-origin:0 50%">21.06.2021</span>
<svg class="abs" style="left:1246px;top:10.40px" width="14" height="13" viewBox="0 0 14 13"><path d="M.5.5h13v8.500h-3.500v3.500l-3.500-3.500h-6z" fill="#fff"/><path d="M2.500 2.800h9M2.500 4.800h9M2.500 6.800h6" stroke="#1c2740" stroke-width=".9"/></svg>
<div class="abs" style="left:1252.500px;top:17.10px;width:13px;height:13px;border-radius:7px;background:#1c2740;border:1px solid #8a8f9c"></div><span class="t" style="left:1252.50px;top:19.55px;font-size:8.50px;color:#fff;width:13px;text-align:center">3</span>
<div class="abs" style="left:1276px;top:0;width:1px;height:33.600px;background:#6a7180"></div>
</div>
</body></html>
